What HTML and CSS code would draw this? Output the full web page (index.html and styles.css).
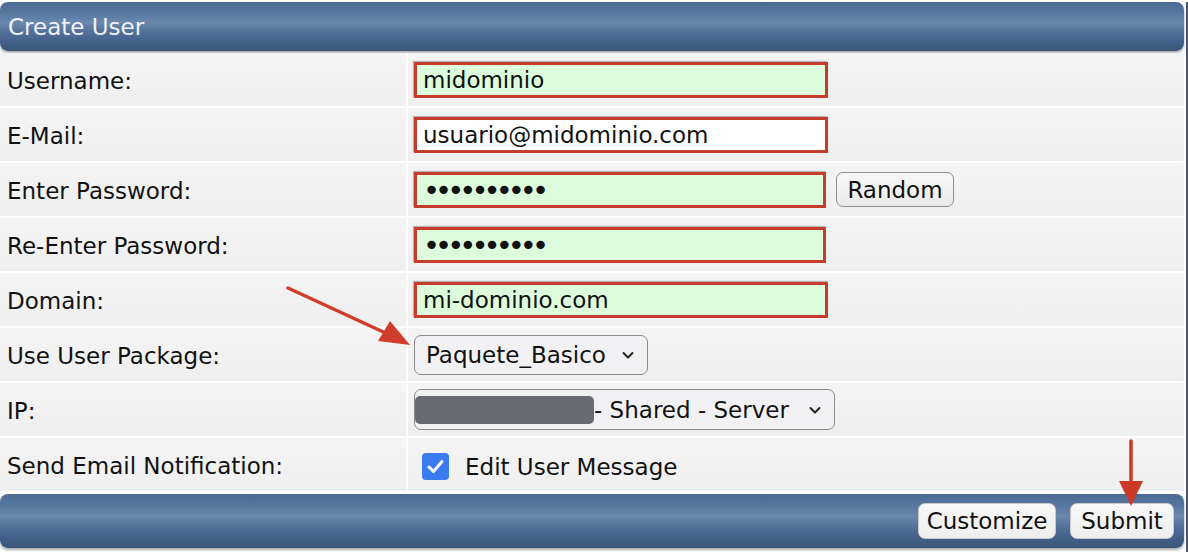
FILE: index.html
```html
<!DOCTYPE html>
<html lang="en">

<head>
    <meta charset="UTF-8">
    <title>Create User</title>
    <link rel="stylesheet" href="styles.css">
</head>

<body>
    <div class="page">
        <div class="bar head">Create User</div>
        <form class="rows">
            <div class="row">
                <div class="label">Username:</div>
                <div class="value"><input class="field ok" type="text" value="midominio"></div>
            </div>
            <div class="row">
                <div class="label">E-Mail:</div>
                <div class="value"><input class="field plain" type="text" value="usuario@midominio.com"></div>
            </div>
            <div class="row">
                <div class="label">Enter Password:</div>
                <div class="value">
                    <input class="field ok pass" type="password" value="xxxxxxxxxx">
                    <button type="button" class="btn random">Random</button>
                </div>
            </div>
            <div class="row">
                <div class="label">Re-Enter Password:</div>
                <div class="value"><input class="field ok pass" type="password" value="xxxxxxxxxx"></div>
            </div>
            <div class="row">
                <div class="label">Domain:</div>
                <div class="value"><input class="field ok" type="text" value="mi-dominio.com"></div>
            </div>
            <div class="row">
                <div class="label">Use User Package:</div>
                <div class="value">
                    <div class="select pkg">
                        <span>Paquete_Basico</span>
                        <svg class="chev" width="14" height="10" viewBox="0 0 14 10"><path d="M2.5 3 L7 7.5 L11.5 3" fill="none" stroke="#222" stroke-width="2" stroke-linecap="round" stroke-linejoin="round"/></svg>
                    </div>
                </div>
            </div>
            <div class="row">
                <div class="label">IP:</div>
                <div class="value">
                    <div class="select ip">
                        <span class="hidden-ip"></span>
                        <span>- Shared - Server</span>
                        <svg class="chev" width="14" height="10" viewBox="0 0 14 10"><path d="M2.5 3 L7 7.5 L11.5 3" fill="none" stroke="#222" stroke-width="2" stroke-linecap="round" stroke-linejoin="round"/></svg>
                    </div>
                </div>
            </div>
            <div class="row">
                <div class="label">Send Email Notification:</div>
                <div class="value">
                    <span class="check">
                        <svg width="27" height="27" viewBox="0 0 27 27"><path d="M7 14 L11.5 18.5 L20 8.5" fill="none" stroke="#fff" stroke-width="3" stroke-linecap="round" stroke-linejoin="round"/></svg>
                    </span>
                    <span class="check-text">Edit User Message</span>
                </div>
            </div>
        </form>
        <div class="bar foot">
            <button type="button" class="btn customize">Customize</button>
            <button type="button" class="btn submit">Submit</button>
        </div>
    </div>

    <!-- red arrows drawn on top of the screenshot -->
    <svg class="arrow arrow-pkg" width="140" height="80" viewBox="0 0 140 80">
        <line x1="2" y1="2" x2="106" y2="50" stroke="#d03d2a" stroke-width="3.5" stroke-linecap="round"/>
        <polygon points="124,59 92,55 104,35" fill="#d03d2a"/>
    </svg>
    <svg class="arrow arrow-submit" width="30" height="72" viewBox="0 0 30 72">
        <line x1="15" y1="2" x2="15" y2="46" stroke="#c93a28" stroke-width="3.5" stroke-linecap="round"/>
        <polygon points="3,42 27,42 15,67" fill="#c93a28"/>
    </svg>
</body>

</html>
```

FILE: styles.css
```css
body {
    margin: 0;
    background: #fff;
    font-family: "DejaVu Sans", Verdana, sans-serif;
    color: #111;
}

.page {
    width: 1184px;
    padding-right: 2px;
    border-right: 2px solid #4a5870;
    height: 552px;
}

.bar {
    border-radius: 8px;
    background: linear-gradient(to bottom, #4b6a94 0%, #5a79a1 25%, #6b89af 42%, #56749b 58%, #42608a 80%, #3a5679 100%);
    box-shadow: 0 2px 3px rgba(0, 0, 0, 0.35);
}

.head {
    margin-top: 2px;
    height: 49px;
    line-height: 50px;
    padding-left: 8px;
    font-size: 23px;
    color: #eef2f8;
}

.rows {
    margin: 2px 0 0 0;
}

.row {
    display: flex;
    height: 53px;
    border-bottom: 2px solid #fff;
}

.label {
    width: 399px;
    padding-left: 7px;
    padding-top: 2px;
    border-right: 2px solid #fff;
    background: linear-gradient(to bottom, #f4f4f4, #efefef);
    font-size: 23px;
    display: flex;
    align-items: center;
}

.value {
    flex: 1;
    padding-left: 6px;
    background: linear-gradient(to bottom, #f4f4f4, #efefef);
    display: flex;
    align-items: center;
}

.field {
    box-sizing: border-box;
    width: 414px;
    height: 36px;
    margin: 0;
    padding: 0 6px;
    border: 3px solid #c63d2d;
    font-family: "DejaVu Sans", Verdana, sans-serif;
    font-size: 23px;
    color: #111;
    box-shadow: -1px -1px 1px rgba(0, 0, 0, 0.25);
    outline: none;
}

.ok {
    background: #dcfcdc;
}

.plain {
    background: #fff;
}

.pass {
    width: 412px;
    font-size: 29px;
    letter-spacing: -5px;
}

.btn {
    height: 36px;
    padding: 0;
    border: 1px solid #8f8f8f;
    border-radius: 7px;
    background: linear-gradient(to bottom, #f7f7f7, #eaeaea);
    font-family: "DejaVu Sans", Verdana, sans-serif;
    font-size: 23px;
    color: #111;
}

.random {
    margin-left: 10px;
    width: 118px;
    height: 35px;
}

.select {
    box-sizing: border-box;
    display: flex;
    align-items: center;
    height: 40px;
    border: 1.5px solid #8a8a8a;
    border-radius: 7px;
    background: #f1f1f3;
    font-size: 23px;
}

.pkg {
    width: 234px;
    padding-left: 11px;
}

.ip {
    width: 421px;
    height: 41px;
    padding-left: 0;
}

.hidden-ip {
    width: 179px;
    height: 28px;
    border-radius: 5px;
    background: #686b72;
}

.chev {
    margin-left: auto;
    margin-right: 12px;
}

.check {
    width: 27px;
    height: 27px;
    margin-left: 8px;
    margin-top: 4px;
    border-radius: 4px;
    background: #3a7cf0;
    display: block;
}

.check svg {
    display: block;
}

.check-text {
    margin-left: 16px;
    margin-top: 4px;
    font-size: 23px;
}

.foot {
    margin-top: 1px;
    height: 54px;
    display: flex;
    align-items: center;
    justify-content: flex-end;
    gap: 14px;
    padding-right: 10px;
}

.foot .btn {
    background: linear-gradient(to bottom, #f8f8f8, #eeeeee);
    border: 1px solid #c8c8c8;
}

.customize {
    width: 138px;
}

.submit {
    width: 104px;
}

.arrow {
    position: absolute;
}

.arrow-pkg {
    left: 286px;
    top: 286px;
}

.arrow-submit {
    left: 1116px;
    top: 439px;
}
```
